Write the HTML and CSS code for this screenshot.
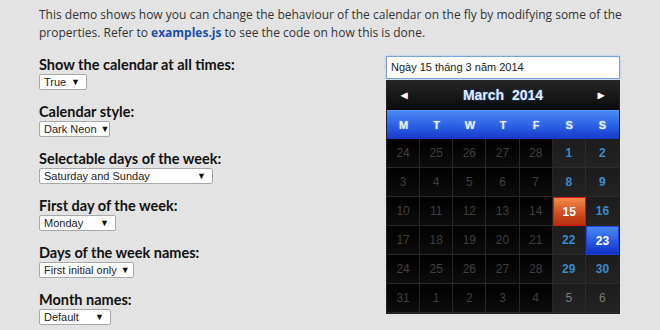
FILE: index.html
```html
<!DOCTYPE html>
<html>
<head>
<meta charset="utf-8">
<link rel="stylesheet" href="styles.css">
</head>
<body>
<div class="page">
  <p class="intro">This demo shows how you can change the behaviour of the calendar on the fly by modifying some of the properties. Refer to <a href="#">examples.js</a> to see the code on how this is done.</p>
  <div class="main">
    <div class="form">
      <div class="field">
        <h4>Show the calendar at all times:</h4>
        <div class="select w-true"><span>True</span><span class="arr">▼</span></div>
      </div>
      <div class="field">
        <h4>Calendar style:</h4>
        <div class="select w-style"><span>Dark Neon</span><span class="arr">▼</span></div>
      </div>
      <div class="field">
        <h4>Selectable days of the week:</h4>
        <div class="select w-days"><span>Saturday and Sunday</span><span class="arr">▼</span></div>
      </div>
      <div class="field">
        <h4>First day of the week:</h4>
        <div class="select w-first"><span>Monday</span><span class="arr">▼</span></div>
      </div>
      <div class="field">
        <h4>Days of the week names:</h4>
        <div class="select w-names"><span>First initial only</span><span class="arr">▼</span></div>
      </div>
      <div class="field">
        <h4>Month names:</h4>
        <div class="select w-month"><span>Default</span><span class="arr">▼</span></div>
      </div>
    </div>
    <div class="cal-wrap">
      <div class="date-input">Ngày 15 tháng 3 năm 2014</div>
      <div class="cal">
        <div class="cal-head"><span class="nav">◄</span><span class="title">March&nbsp; 2014</span><span class="nav">►</span></div>
        <div class="cal-days"><span>M</span><span>T</span><span>W</span><span>T</span><span>F</span><span>S</span><span>S</span></div>
        <div class="grid">
          <span class="d o">24</span><span class="d o">25</span><span class="d o">26</span><span class="d o">27</span><span class="d o">28</span><span class="d we">1</span><span class="d we">2</span>
          <span class="d o">3</span><span class="d o">4</span><span class="d o">5</span><span class="d o">6</span><span class="d o">7</span><span class="d we">8</span><span class="d we">9</span>
          <span class="d o">10</span><span class="d o">11</span><span class="d o">12</span><span class="d o">13</span><span class="d o">14</span><span class="d we sel">15</span><span class="d we">16</span>
          <span class="d o">17</span><span class="d o">18</span><span class="d o">19</span><span class="d o">20</span><span class="d o">21</span><span class="d we">22</span><span class="d we today">23</span>
          <span class="d o">24</span><span class="d o">25</span><span class="d o">26</span><span class="d o">27</span><span class="d o">28</span><span class="d we">29</span><span class="d we">30</span>
          <span class="d o">31</span><span class="d o">1</span><span class="d o">2</span><span class="d o">3</span><span class="d o">4</span><span class="d we om">5</span><span class="d we om">6</span>
        </div>
      </div>
    </div>
  </div>
</div>
</body>
</html>
```
FILE: styles.css
```css
html, body {
  margin: 0;
  padding: 0;
}
body {
  background: #e3e3e3;
  font-family: Lato, "Open Sans", "Liberation Sans", sans-serif;
  color: #333;
  width: 660px;
  height: 330px;
  overflow: hidden;
}
.page {
  padding: 6px 0 0 39px;
}
.intro {
  margin: 0;
  font-family: "Open Sans", "Liberation Sans", sans-serif;
  font-size: 12px;
  line-height: 18px;
  width: 600px;
  color: #333;
}
.intro a {
  color: #1d4fa8;
  font-weight: bold;
  text-decoration: none;
}
.main {
  display: flex;
  margin-top: 14px;
}
.form {
  width: 347px;
  display: flex;
  flex-direction: column;
  gap: 13px;
}
.field h4 {
  margin: 0;
  font-size: 14.5px;
  line-height: 17px;
  font-weight: bold;
  color: #111;
}
.select {
  margin-top: 1px;
  height: 14px;
  background: #fff;
  border: 1px solid #a9a9a9;
  border-radius: 2px;
  display: flex;
  justify-content: space-between;
  align-items: center;
  gap: 4px;
  padding: 0 6px 0 4px;
  font-family: "Liberation Sans", Arial, sans-serif;
  font-size: 11px;
  color: #222;
  white-space: nowrap;
  box-sizing: content-box;
}
.select .arr {
  font-size: 9px;
  color: #111;
}
.w-true { width: 36px; }
.w-style { width: 59px; }
.w-days { width: 162px; }
.w-first { width: 65px; }
.w-names { width: 83px; }
.w-month { width: 60px; }

.cal-wrap {
  width: 234px;
}
.date-input {
  height: 21px;
  border: 1px solid #7aa2e0;
  background: #fff;
  font-family: "Liberation Sans", Arial, sans-serif;
  font-size: 11px;
  line-height: 21px;
  padding: 0 4px;
  color: #222;
  box-shadow: 0 0 2px #9bbcf0;
}
.cal {
  margin-top: 1px;
  background: #1a1a1a;
  border: 1px solid #222;
  border-top: 0;
  font-family: "Liberation Sans", Arial, sans-serif;
}
.cal-head {
  height: 30px;
  display: flex;
  align-items: center;
  justify-content: space-between;
  padding: 0 12px;
  background: linear-gradient(#262626, #0b0b0b);
}
.cal-head .nav {
  color: #fff;
  font-size: 11px;
  text-shadow: -1px 0 0 #c8a060;
}
.cal-head .title {
  color: #e2ecff;
  font-weight: bold;
  font-size: 14px;
  text-shadow: 0 0 2px #3a6ad0;
}
.cal-days {
  display: grid;
  grid-template-columns: repeat(7, 1fr);
  height: 28px;
  align-items: center;
  background: linear-gradient(#4a88f4, #2b63e6 50%, #1838c8);
  border-top: 1px solid #5a94ff;
}
.cal-days span {
  text-align: center;
  color: #eef3ff;
  font-weight: bold;
  font-size: 11px;
  text-shadow: 0 0 2px #8ab0ff;
}
.grid {
  display: grid;
  grid-template-columns: repeat(7, 1fr);
  grid-auto-rows: 29px;
  background: #222;
}
.d {
  display: flex;
  align-items: center;
  justify-content: center;
  font-size: 12px;
  border-right: 1px solid #262626;
  border-bottom: 1px solid #262626;
}
.d:nth-child(7n) {
  border-right: 0;
}
.d.o {
  background: linear-gradient(#000, #0d0d0d);
  color: #3f3f3f;
}
.d.we {
  background: linear-gradient(#1c1c1c, #232323);
  color: #3a8acc;
  font-weight: bold;
  border-color: #2b2b2b;
}
.d.we.om {
  color: #7a7a7a;
  font-weight: normal;
}
.d.sel {
  background: linear-gradient(#f58a4a, #d04a1e 60%, #b52e10);
  border: 1px solid #e01010;
  color: #fff;
}
.d.today {
  background: linear-gradient(#4a88f4, #2454e0 60%, #1030c0);
  border: 1px solid #1d3fe0;
  color: #fff;
}
```
